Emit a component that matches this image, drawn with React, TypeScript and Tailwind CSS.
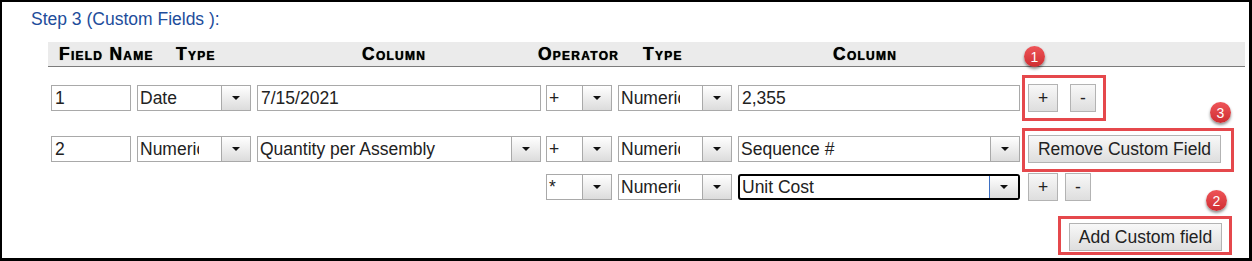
import React from 'react';

// Step 3 of a report builder: custom field rows, with the red callouts from the help doc on top.

const TextBox = ({ value, width }: { value: string; width: string }) => (
  <div className={`${width} h-[26px] shrink-0 border border-[#a9a9a9] bg-white pl-[3px] flex items-center text-[#222] leading-[20px] whitespace-nowrap`}>
    {value}
  </div>
);

interface SelectProps {
  value: string;
  width: string;
  clip?: string;
  focused?: boolean;
}

const Select = ({ value, width, clip, focused }: SelectProps) => (
  <div
    className={`${width} h-[26px] shrink-0 flex bg-white ${
      focused ? 'border-2 border-black rounded-[3px]' : 'border border-[#a9a9a9]'
    }`}
  >
    <div className="flex-1 min-w-0 flex items-center pl-[2px]">
      <span className={`${clip ?? ''} ${clip ? 'overflow-hidden' : ''} whitespace-nowrap text-[#222] leading-[20px]`}>{value}</span>
    </div>
    <div
      className={`w-[29px] shrink-0 flex items-center justify-center border-l bg-linear-to-b from-[#ffffff] to-[#dcdcdc] ${
        focused ? 'border-[#3d6fc2]' : 'border-[#a9a9a9]'
      }`}
    >
      <div className="w-0 h-0 border-x-4 border-x-transparent border-t-4 border-t-[#111]" />
    </div>
  </div>
);

const Btn = ({ label, width }: { label: string; width: string }) => (
  <button
    className={`${width} h-[28px] shrink-0 border border-[#b3b3b3] bg-linear-to-b from-[#f8f8f8] to-[#dedede] text-[#222] leading-[20px] flex items-center justify-center`}
  >
    {label}
  </button>
);

const Badge = ({ n, pos }: { n: string; pos: string }) => (
  <div
    className={`absolute ${pos} w-[21px] h-[21px] rounded-full bg-linear-to-b from-[#ee5458] to-[#cf2c31] text-white text-[14px] leading-none flex items-center justify-center shadow-[0_2px_3px_rgba(0,0,0,0.45)]`}
  >
    {n}
  </div>
);

const headerLabel =
  "shrink-0 whitespace-nowrap font-bold [font-variant:small-caps] tracking-[1.25px] text-black [text-shadow:0_0_0.7px_#000]";

export default function App() {
  return (
    <div className="relative w-[1252px] h-[261px] overflow-hidden bg-white border-black border-t-2 border-l-2 border-r-[3px] border-b-[3px] font-['Liberation_Sans',Arial,sans-serif] text-[17.5px]">
      <div className="pt-[7px] pl-[29px] leading-[20px] text-[#1e4d9b]">Step 3 (Custom Fields ):</div>

      <div className="ml-[46px] mr-[4px] mt-[13px]">
        {/* table header */}
        <div className="h-[25px] bg-[#ebebeb] border-b border-[#7c7c7c] flex items-center leading-[20px]">
          <span className={`${headerLabel} ml-[11px] w-[96px]`}>Field Name</span>
          <span className={`${headerLabel} ml-[21px] w-[39px]`}>Type</span>
          <span className={`${headerLabel} ml-[147px] w-[68px]`}>Column</span>
          <span className={`${headerLabel} ml-[108px] w-[84px]`}>Operator</span>
          <span className={`${headerLabel} ml-[21px] w-[39px]`}>Type</span>
          <span className={`${headerLabel} ml-[151px] w-[69px]`}>Column</span>
        </div>

        {/* row 1 */}
        <div className="mt-[17px] h-[28px] flex items-center pl-[3px]">
          <TextBox value="1" width="w-[80px]" />
          <div className="ml-[6px]"><Select value="Date" width="w-[114px]" /></div>
          <div className="ml-[6px]"><TextBox value="7/15/2021" width="w-[284px]" /></div>
          <div className="ml-[5px]"><Select value="+" width="w-[66px]" /></div>
          <div className="ml-[6px]"><Select value="Numeric" width="w-[114px]" clip="inline-block w-[59px]" /></div>
          <div className="ml-[6px]"><TextBox value="2,355" width="w-[282px]" /></div>
          <div className="ml-[8px] flex gap-[12px]">
            <Btn label="+" width="w-[30px]" />
            <Btn label="-" width="w-[26px]" />
          </div>
        </div>

        {/* row 2 */}
        <div className="mt-[23px] h-[28px] flex items-center pl-[3px]">
          <TextBox value="2" width="w-[80px]" />
          <div className="ml-[6px]"><Select value="Numeric" width="w-[114px]" clip="inline-block w-[59px]" /></div>
          <div className="ml-[6px]"><Select value="Quantity per Assembly" width="w-[284px]" /></div>
          <div className="ml-[5px]"><Select value="+" width="w-[66px]" /></div>
          <div className="ml-[6px]"><Select value="Numeric" width="w-[114px]" clip="inline-block w-[59px]" /></div>
          <div className="ml-[6px]"><Select value="Sequence #" width="w-[282px]" /></div>
          <div className="ml-[8px]"><Btn label="Remove Custom Field" width="w-[193px]" /></div>
        </div>

        {/* row 3: second term of row 2 */}
        <div className="mt-[10px] h-[28px] flex items-center pl-[498px]">
          <Select value="*" width="w-[66px]" />
          <div className="ml-[6px]"><Select value="Numeric" width="w-[114px]" clip="inline-block w-[59px]" /></div>
          <div className="ml-[6px]"><Select value="Unit Cost" width="w-[282px]" focused /></div>
          <div className="ml-[8px] flex gap-[7px]">
            <Btn label="+" width="w-[30px]" />
            <Btn label="-" width="w-[26px]" />
          </div>
        </div>

        <div className="mt-[22px] flex pl-[1021px]">
          <Btn label="Add Custom field" width="w-[153px]" />
        </div>
      </div>

      <div className="mt-[4px] pl-[31px] leading-[20px] text-[#1e4d9b]">Step 4 (Selection Criteria)</div>

      {/* doc callouts */}
      <div className="absolute left-[1020px] top-[73px] w-[84px] h-[46px] border-[3px] border-[#e5484c]" />
      <div className="absolute left-[1020px] top-[126px] w-[212px] h-[44px] border-[3px] border-[#e5484c]" />
      <div className="absolute left-[1056px] top-[214px] w-[174px] h-[39px] border-[3px] border-[#e5484c]" />
      <Badge n="1" pos="left-[1022px] top-[44px]" />
      <Badge n="3" pos="left-[1208px] top-[100px]" />
      <Badge n="2" pos="left-[1204px] top-[188px]" />
    </div>
  );
}
